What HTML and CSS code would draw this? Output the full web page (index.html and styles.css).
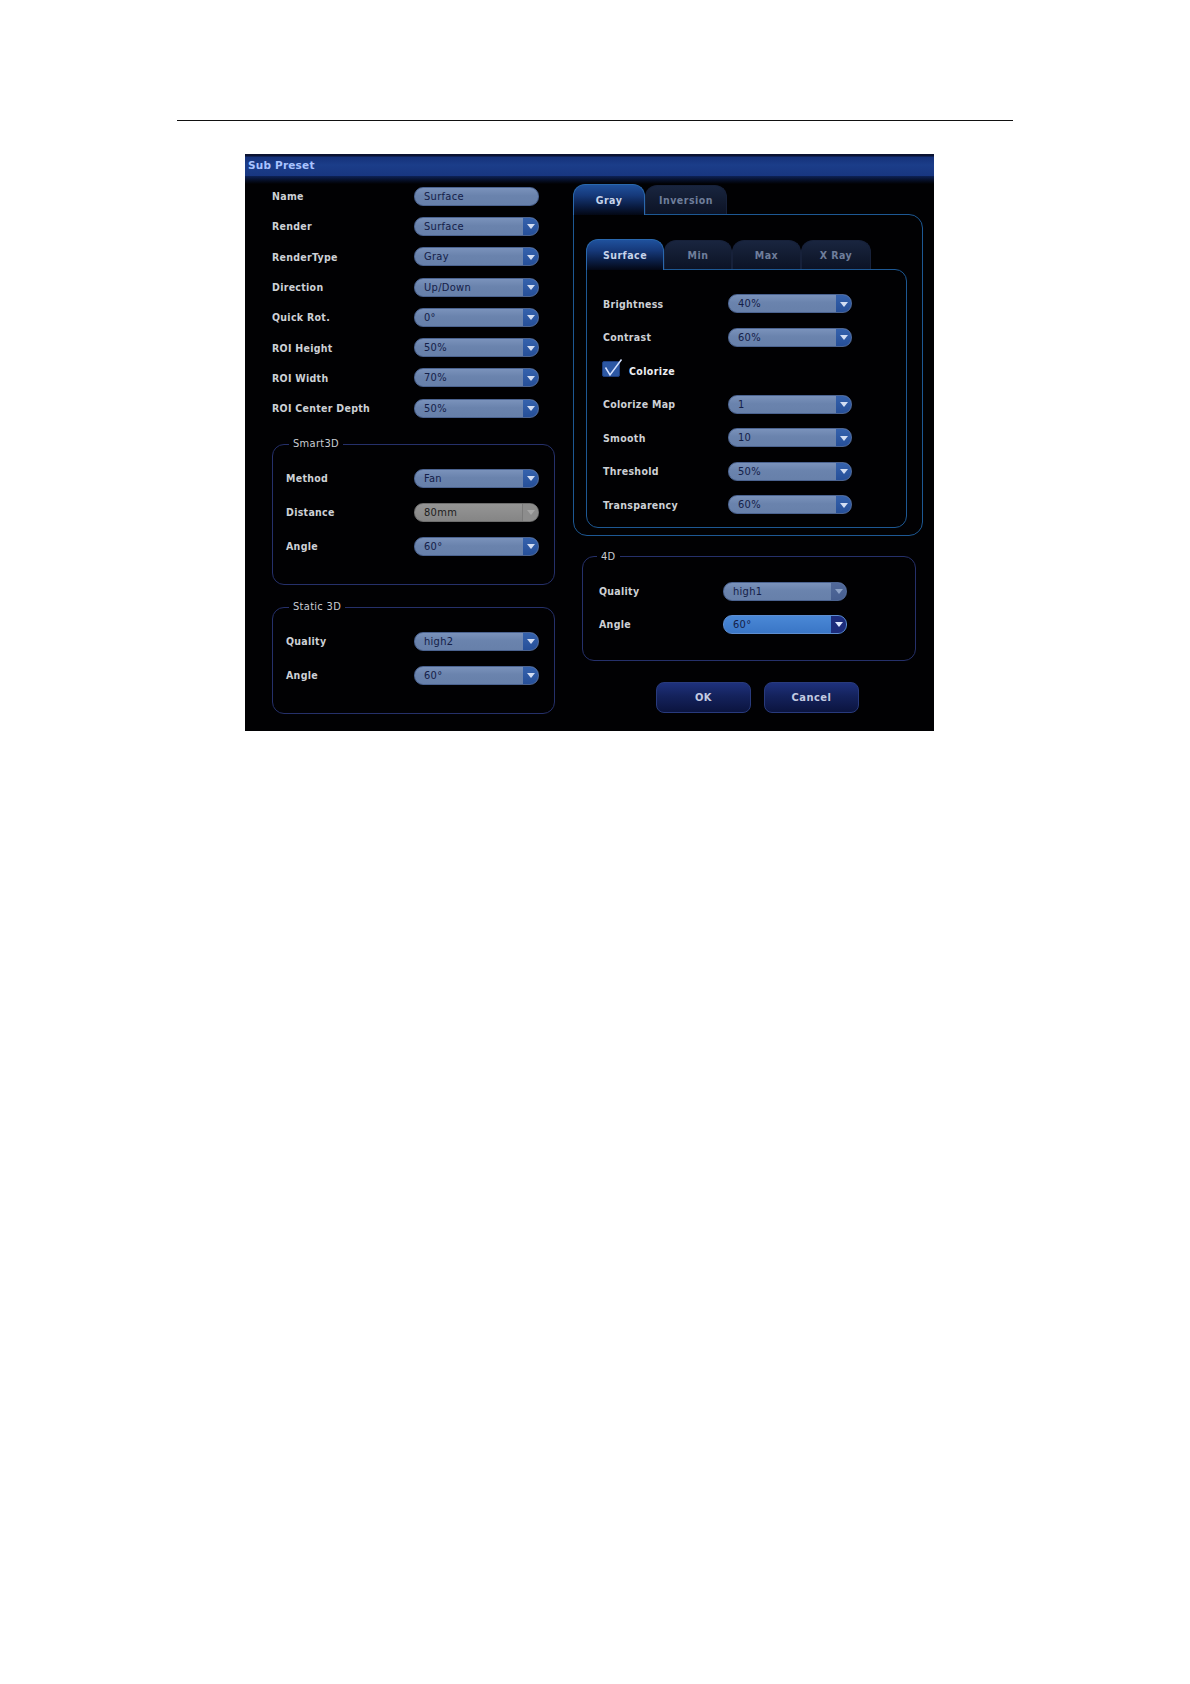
FILE: index.html
```html
<!DOCTYPE html>
<html>
<head>
<meta charset="utf-8">
<title>Sub Preset</title>
<link rel="stylesheet" href="styles.css">
</head>
<body>
<div class="page">
  <div class="rule"></div>
  <div class="dialog">
    <div class="titlebar">Sub Preset</div>
    <div class="dlg-body">
      <div class="col-left">
        <div class="rows rows-top">
          <div class="row"><span class="lbl">Name</span><div class="field text"><span class="val">Surface</span></div></div>
          <div class="row"><span class="lbl">Render</span><div class="field"><span class="val">Surface</span><span class="arr"></span></div></div>
          <div class="row"><span class="lbl">RenderType</span><div class="field"><span class="val">Gray</span><span class="arr"></span></div></div>
          <div class="row"><span class="lbl">Direction</span><div class="field"><span class="val">Up/Down</span><span class="arr"></span></div></div>
          <div class="row"><span class="lbl">Quick Rot.</span><div class="field"><span class="val">0°</span><span class="arr"></span></div></div>
          <div class="row"><span class="lbl">ROI Height</span><div class="field"><span class="val">50%</span><span class="arr"></span></div></div>
          <div class="row"><span class="lbl">ROI Width</span><div class="field"><span class="val">70%</span><span class="arr"></span></div></div>
          <div class="row"><span class="lbl">ROI Center Depth</span><div class="field"><span class="val">50%</span><span class="arr"></span></div></div>
        </div>
        <fieldset class="group g-smart">
          <legend>Smart3D</legend>
          <div class="rows rows-group">
            <div class="row"><span class="lbl">Method</span><div class="field"><span class="val">Fan</span><span class="arr"></span></div></div>
            <div class="row"><span class="lbl">Distance</span><div class="field disabled"><span class="val">80mm</span><span class="arr"></span></div></div>
            <div class="row"><span class="lbl">Angle</span><div class="field"><span class="val">60°</span><span class="arr"></span></div></div>
          </div>
        </fieldset>
        <fieldset class="group g-static">
          <legend>Static 3D</legend>
          <div class="rows rows-group">
            <div class="row"><span class="lbl">Quality</span><div class="field"><span class="val">high2</span><span class="arr"></span></div></div>
            <div class="row"><span class="lbl">Angle</span><div class="field"><span class="val">60°</span><span class="arr"></span></div></div>
          </div>
        </fieldset>
      </div>
      <div class="col-right">
        <div class="tabs outer-tabs">
          <div class="tab active t-gray">Gray</div>
          <div class="tab t-inv">Inversion</div>
        </div>
        <div class="panel outer-panel">
          <div class="tabs inner-tabs">
            <div class="tab active t-surface">Surface</div>
            <div class="tab t-min">Min</div>
            <div class="tab t-max">Max</div>
            <div class="tab t-xray">X Ray</div>
          </div>
          <div class="panel inner-panel">
            <div class="rows rows-inner">
              <div class="row"><span class="lbl">Brightness</span><div class="field"><span class="val">40%</span><span class="arr"></span></div></div>
              <div class="row"><span class="lbl">Contrast</span><div class="field"><span class="val">60%</span><span class="arr"></span></div></div>
              <div class="row check-row">
                <svg class="checkbox" width="22" height="20" viewBox="0 0 22 20">
                  <rect x="0.5" y="3.5" width="17" height="15" rx="1.5" fill="#2c57a3" stroke="#1c3c7c"/>
                  <polyline points="3.5,9.5 8,17 19.5,1.5" fill="none" stroke="#d6e2ff" stroke-width="1.5"/>
                </svg>
                <span class="chk-lbl">Colorize</span>
              </div>
              <div class="row"><span class="lbl">Colorize Map</span><div class="field"><span class="val">1</span><span class="arr"></span></div></div>
              <div class="row"><span class="lbl">Smooth</span><div class="field"><span class="val">10</span><span class="arr"></span></div></div>
              <div class="row"><span class="lbl">Threshold</span><div class="field"><span class="val">50%</span><span class="arr"></span></div></div>
              <div class="row"><span class="lbl">Transparency</span><div class="field"><span class="val">60%</span><span class="arr"></span></div></div>
            </div>
          </div>
        </div>
        <fieldset class="group g-4d">
          <legend>4D</legend>
          <div class="rows rows-4d">
            <div class="row"><span class="lbl">Quality</span><div class="field dim"><span class="val">high1</span><span class="arr"></span></div></div>
            <div class="row"><span class="lbl">Angle</span><div class="field focus"><span class="val">60°</span><span class="arr"></span></div></div>
          </div>
        </fieldset>
        <div class="buttons">
          <button class="btn">OK</button>
          <button class="btn">Cancel</button>
        </div>
      </div>
    </div>
  </div>
</div>
</body>
</html>
```

FILE: styles.css
```css
html, body {
  margin: 0;
  padding: 0;
  background: #ffffff;
}

.page {
  width: 1190px;
  height: 1684px;
  overflow: hidden;
}

.rule {
  margin: 120px 0 0 177px;
  width: 836px;
  height: 1px;
  background: #111;
}

.dialog {
  margin: 33px 0 0 245px;
  width: 689px;
  height: 577px;
  background: #010103;
  font-family: "DejaVu Sans Condensed", "Liberation Sans", sans-serif;
  font-size: 10.5px;
  color: #cfd1d6;
}

.titlebar {
  height: 22px;
  box-sizing: border-box;
  padding: 4px 0 0 3px;
  background: linear-gradient(to bottom, #0b1332 0, #0b1332 2px, #15317a 3px, #1b3d89 50%, #183680 100%);
  font-family: "DejaVu Sans", Verdana, sans-serif;
  font-weight: bold;
  font-size: 10.5px;
  letter-spacing: 0.2px;
  color: #a9c3ff;
  line-height: 14px;
}

.dlg-body {
  display: flex;
  height: 555px;
  background: linear-gradient(to bottom, #0d2256 0, #06102a 4px, #010103 8px, #010103 100%);
}

/* ---------- left column ---------- */
.col-left {
  width: 328px;
  box-sizing: border-box;
  padding: 5px 0 0 27px;
}

.row {
  display: grid;
  align-items: center;
}

.rows-top .row {
  grid-template-columns: 142px 125px;
  height: 30.3px;
}

.lbl {
  font-weight: bold;
  letter-spacing: 0.3px;
  color: #cdd0d5;
  white-space: nowrap;
}

/* ---------- group boxes ---------- */
.group {
  margin: 0;
  padding: 0;
  border: 1px solid #25306a;
  border-radius: 12px;
  min-width: 0;
}

.group legend {
  margin-left: 16px;
  padding: 0 4px;
  line-height: 14px;
  font-size: 11px;
  letter-spacing: 0.3px;
  color: #c9ccd2;
}

.g-smart {
  width: 283px;
  box-sizing: border-box;
  margin-top: 14px;
}

.g-static {
  width: 283px;
  box-sizing: border-box;
  margin-top: 15px;
}

.rows-group {
  padding: 10px 0 21px 13px;
}

.rows-group .row {
  grid-template-columns: 128px 125px;
  height: 34px;
}

/* ---------- fields ---------- */
.field {
  display: flex;
  width: 125px;
  height: 19px;
  box-sizing: border-box;
  border: 1px solid #4b6390;
  border-radius: 9px;
  background: linear-gradient(to bottom, #7a92bb 0%, #6a83ad 45%, #6780aa 100%);
  overflow: hidden;
}

.field .val {
  flex: 1;
  padding-left: 9px;
  line-height: 17px;
  font-size: 11px;
  letter-spacing: 0.3px;
  color: #142048;
  white-space: nowrap;
}

.field .arr {
  width: 15px;
  display: flex;
  align-items: center;
  justify-content: center;
  background: linear-gradient(to bottom, #3562ad, #264f98);
}

.field .arr::after {
  content: "";
  border-left: 4px solid transparent;
  border-right: 4px solid transparent;
  border-top: 5px solid #d3def3;
  margin-top: 1px;
}

.field.disabled {
  border-color: #6e6e6e;
  background: linear-gradient(to bottom, #959595, #858585);
}

.field.disabled .val {
  color: #1c1c1c;
}

.field.disabled .arr {
  background: #8d8d8d;
  border-left: 1px solid #7a7a7a;
}

.field.disabled .arr::after {
  border-top-color: #a7a7a7;
}

.field.dim .arr {
  background: linear-gradient(to bottom, #51699a, #465e90);
}

.field.dim .arr::after {
  border-top-color: #8ea3c8;
}

.field.focus {
  border-color: #5d8dd0;
  background: linear-gradient(to bottom, #4a88d6, #3a76c6);
}

.field.focus .arr {
  background: #1c2c7c;
}

.field.focus .arr::after {
  border-top-color: #dfe8ff;
}

/* ---------- right column ---------- */
.col-right {
  width: 350px;
  box-sizing: border-box;
  padding-top: 8px;
}

.tabs {
  display: flex;
  align-items: flex-end;
}

.tab {
  position: relative;
  height: 29px;
  box-sizing: border-box;
  border: 1px solid #17213a;
  border-bottom: none;
  border-radius: 12px 12px 0 0;
  background: linear-gradient(to bottom, #19253f 0%, #111a2f 60%, #0c1326 100%);
  color: #6f7e9b;
  font-size: 10.5px;
  font-weight: bold;
  letter-spacing: 0.5px;
  text-align: center;
  line-height: 28px;
}

.tab.active {
  height: 31px;
  margin-bottom: -1px;
  z-index: 1;
  border-color: #2a68ad;
  background: linear-gradient(to bottom, #1f519d 0%, #16397a 35%, #0a1d44 70%, #030714 100%);
  color: #c6d3ea;
  line-height: 30px;
}

.t-gray { width: 72px; }
.t-inv { width: 82px; }
.t-surface { width: 78px; }
.t-min { width: 68px; }
.t-max { width: 69px; }
.t-xray { width: 70px; }

.panel {
  border: 1px solid #1d5893;
  background: #010103;
}

.outer-panel {
  border-radius: 0 14px 14px 14px;
  padding: 24px 15px 7px 12px;
}

.inner-panel {
  width: 321px;
  box-sizing: border-box;
  border-radius: 0 12px 12px 12px;
  padding: 17px 0 5px 16px;
}

.rows-inner .row {
  grid-template-columns: 125px 124px;
  height: 33.5px;
}

.rows-inner .field,
.rows-4d .field {
  width: 124px;
}

.check-row {
  display: flex;
  align-items: center;
}

.checkbox {
  display: block;
  margin: -5px 0 0 -1px;
}

.chk-lbl {
  margin-left: 5px;
  font-weight: bold;
  letter-spacing: 0.4px;
  color: #eceef2;
}

.g-4d {
  margin: 14px 7px 0 9px;
}

.g-4d legend {
  margin-left: 14px;
}

.rows-4d {
  padding: 11px 0 19px 16px;
}

.rows-4d .row {
  grid-template-columns: 124px 124px;
  height: 33px;
}

.buttons {
  display: flex;
  gap: 13px;
  padding: 21px 0 0 83px;
}

.btn {
  width: 95px;
  height: 31px;
  border: 1px solid #283a7c;
  border-radius: 8px;
  background: linear-gradient(to bottom, #1e317c 0%, #14225c 45%, #0b143f 100%);
  color: #c3cbe2;
  font-family: "DejaVu Sans Condensed", "Liberation Sans", sans-serif;
  font-size: 11px;
  font-weight: bold;
  letter-spacing: 0.5px;
  padding: 0;
}
```
